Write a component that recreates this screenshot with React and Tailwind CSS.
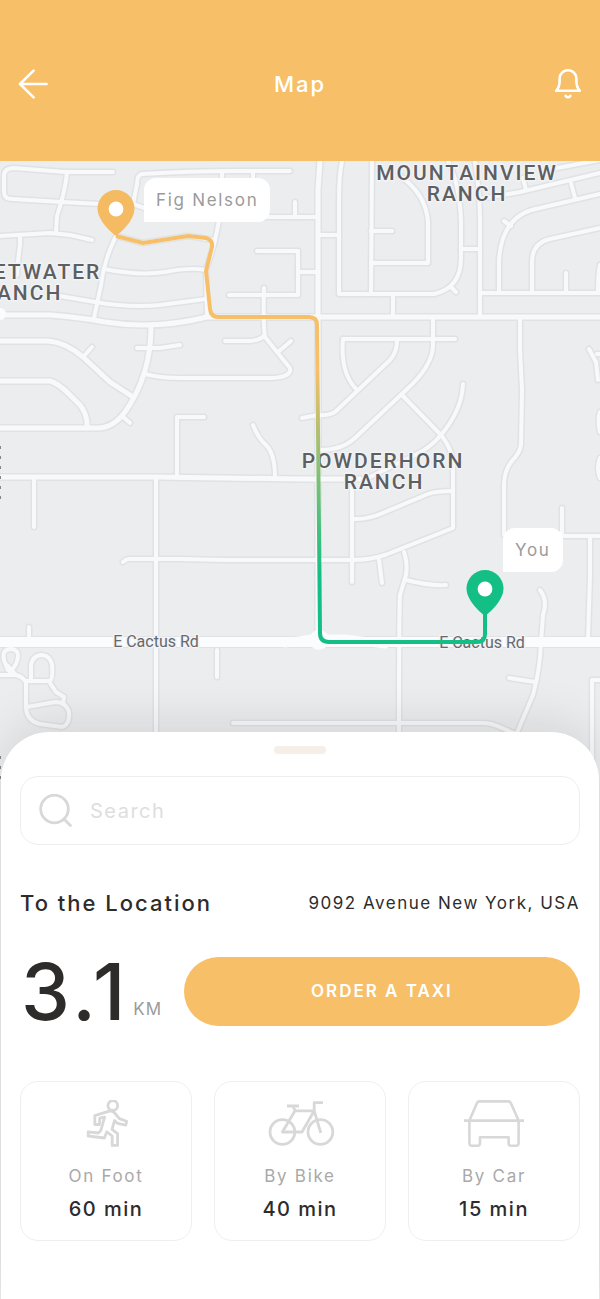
// Ride map screen: header, street map with the route, and the trip sheet

import { useState } from 'react';

// Side streets, drawn with a soft casing under a light fill
const STREETS = [
  'M113 172 L65 172 L14 168 Q4 168 4 176 V192 Q4 199 12 199 L62 202 L100 204',
  'M67 172 Q66 185 61 203 L57 216 L56 232',
  'M0 236 L50 233 L70 235 L92 240',
  'M20 236 V245 Q18 258 17 275',
  'M290 171 H235 Q190 171 142 174 Q137 175 137 184 L133 204 L150 210',
  'M222 172 V190',
  'M253 172 V190',
  'M295 202 V217',
  'M262 217 H318',
  'M220 216 L214 245 L206 270 L207 316',
  'M116 236 Q104 260 101 285 L94 318',
  'M116 236 L143 243 L188 236 L214 240',
  'M104 269 Q140 276 165 272 Q190 267 206 270',
  'M60 296 L95 302 Q130 308 160 305 L206 299',
  'M83 357 L92 347',
  'M122 416 L130 423',
  'M137 348 L160 348 L180 345',
  'M145 374 Q160 378 180 378 H272 Q292 377 290 368 Q285 362 265 337 Q263 325 264 288',
  'M278 352 L291 341',
  'M225 341 H250 Q260 340 264 336',
  'M229 295 H298 V251 H257',
  'M298 272 H318',
  'M204 417 H177 V476',
  'M253 425 Q258 438 266 445 Q275 454 275 477',
  'M342 161 Q339 175 339 200 V294 H434 Q461 288 461 258 V222 Q460 185 448 161',
  'M372 161 L371 294',
  'M371 231 H392',
  'M371 263 H428 V222 Q426 194 400 176',
  'M452 288 L456 292',
  'M318 235 H338',
  'M393 295 V316',
  'M475 161 Q480 195 480 220 V316',
  'M461 249 H480',
  'M480 293 H600',
  'M499 293 V260 Q502 214 540 208 L600 194',
  'M504 221 L511 226',
  'M532 293 V262 Q532 243 550 239 L600 228',
  'M566 293 V273',
  'M480 199 L520 192 L600 173',
  'M526 190 L523 178',
  'M575 198 L571 183',
  'M552 169 L600 160',
  'M600 265 Q598 275 598 292',
  'M433 318 V345 Q433 366 405 391 L355 438 Q342 450 320 450',
  'M343 339 H455',
  'M343 339 Q340 372 356 389',
  'M397 341 Q397 352 390 360 L335 412 Q328 416 318 415 L302 418',
  'M402 395 L441 435 Q453 450 453 465 V528 L385 555 Q370 560 352 560 L225 560 L180 559 H130 Q126 559 123 562',
  'M463 384 Q462 410 441 435 Q430 448 415 455 L370 477',
  'M520 317 V350 L522 390 L521 445 Q520 453 511 462 Q504 472 504 485 V535',
  'M589 349 L596 362 L598 380',
  'M597 354 H600',
  'M600 412 Q597 420 600 432',
  'M600 458 Q596 468 600 478',
  'M352 482 V582',
  'M352 519 Q368 520 385 512 L428 494 Q436 491 453 491',
  'M379 560 L382 583',
  'M404 552 Q408 564 406 575 L400 595 Q399 610 399 735',
  'M406 580 Q430 586 446 585',
  'M562 508 V536',
  'M550 536 H600',
  'M590 537 V575 L588 640',
  'M540 590 Q548 600 543 615 L541 642 Q540 670 533 695 L516 735',
  'M509 678 L535 682',
  'M233 723 H482 Q492 723 502 728 L520 736',
  'M592 780 V680 H600',
  'M34 480 V527',
  'M156 478 V735',
  'M29 627 V640',
  'M217 650 V677',
  'M8 670 Q-2 650 10 649 Q22 649 16 664 L10 673 M7 665 L16 675',
  'M0 675 H15 Q22 676 25 681 H50 Q53 679 52 665 Q50 655 41 655 Q31 656 31 668 V681',
  'M26 681 V708 Q27 721 40 724 L62 727 Q70 725 69 712 Q66 702 55 702 L27 707',
  'M50 683 L56 692 L64 697 L63 703',
];

const AVENUES = [
  'M0 315 L50 315 Q85 318 105 322 Q155 330 207 317 H600',
  'M0 341 H48 Q65 342 83 357 L110 382 L133 397',
  'M0 381 H50 Q58 383 70 395 L80 405 Q88 415 87 428',
  'M0 428 H98 Q113 428 125 412 Q151 375 151 327',
  'M0 477 L155 477 L300 479 H360',
  'M320 161 L318 190 V640',
];

const TRIP_OPTIONS = [
  { id: 'foot', label: 'On Foot', time: '60 min', Icon: RunnerIcon },
  { id: 'bike', label: 'By Bike', time: '40 min', Icon: BikeIcon },
  { id: 'car', label: 'By Car', time: '15 min', Icon: CarIcon },
];

function RunnerIcon() {
  return (
    <svg width="46" height="48" viewBox="-4 0 46 48" fill="none" stroke="currentColor" strokeWidth="2.8" strokeLinejoin="round">
      <circle cx="25.8" cy="5.6" r="4.9" />
      <path d="M7.8 24.5V15.6L23 10.8Q26.5 10.6 28.5 14L32.3 18.6L39.6 21.2L38.8 25.2L30.4 23.4L27.6 20.4L25 29.4L30.6 33.6V45.4H25.2V36L19.8 31.8L17.4 38L1.2 36V31.8L11.4 33L13.8 30.6L17.6 17L12.8 18.2L12.4 24.5Z" />
    </svg>
  );
}

function BikeIcon() {
  return (
    <svg width="70" height="48" viewBox="-3 0 70 48" fill="none" stroke="currentColor" strokeWidth="2.8" strokeLinejoin="round">
      <circle cx="14.4" cy="32" r="12.4" />
      <circle cx="52.4" cy="32" r="12.4" />
      <path d="M19 6H31M25 6L27 10.8M55 2.6H46.2V10.8L52.8 33M27 10.8H46.2L34 32H14.4L27 10.8" />
    </svg>
  );
}

function CarIcon() {
  return (
    <svg width="60" height="48" viewBox="0 0 60 48" fill="none" stroke="currentColor" strokeWidth="2.6" strokeLinejoin="round">
      <path d="M0 20.6H60" />
      <path d="M5.4 20.6L13 3Q13.8 1.4 15.4 1.4H44.4Q46 1.4 46.8 3L54.6 20.6V43Q54.6 45.8 52 45.8H47Q44.6 45.8 44.6 43V37.2H16V43Q16 45.8 13.4 45.8H8Q5.4 45.8 5.4 43Z" />
    </svg>
  );
}

// Teardrop pin whose tip sits on (x, y)
function Pin({ x, y, color }) {
  return (
    <g transform={`translate(${x} ${y})`}>
      <path d="M0 0C-3 -2 -18.5 -15 -18.5 -27.5A18.5 18.5 0 0 1 18.5 -27.5C18.5 -15 3 -2 0 0Z" fill={color} />
      <circle cx="0" cy="-27" r="7.4" fill="#fff" />
    </g>
  );
}

function StreetMap() {
  return (
    <svg className="block" width="600" height="618" viewBox="0 161 600 618" fill="none" aria-label="Street map">
      <defs>
        <linearGradient id="route" gradientUnits="userSpaceOnUse" x1="0" y1="370" x2="0" y2="575">
          <stop offset="0" stopColor="#f7bf68" />
          <stop offset="1" stopColor="#13bf84" />
        </linearGradient>
      </defs>
      <rect x="0" y="161" width="600" height="618" fill="#ebedef" />

      <g strokeLinecap="round" strokeLinejoin="round">
        <g stroke="#e0e2e5">
          {STREETS.map(d => <path key={d} d={d} strokeWidth="7" />)}
          {AVENUES.map(d => <path key={d} d={d} strokeWidth="8" />)}
          <path d="M-10 642H610" strokeWidth="12" />
        </g>
        <g stroke="#f8f9fa">
          {STREETS.map(d => <path key={d} d={d} strokeWidth="4" />)}
          {AVENUES.map(d => <path key={d} d={d} strokeWidth="5" />)}
        </g>
        <path d="M-10 642H610" stroke="#fbfcfd" strokeWidth="10" />
        <path d="M285 643L312 639H345L385 644" stroke="#fbfcfd" strokeWidth="9" />
        <circle cx="319" cy="640" r="10" fill="#fbfcfd" />
        <circle cx="0" cy="314" r="6" fill="#fbfcfd" />
      </g>

      {/* Neighbourhood and road names */}
      <g
        fontFamily="Roboto, sans-serif"
        fill="#5d5f62"
        stroke="#f2f3f5"
        strokeWidth="3"
        strokeLinejoin="round"
        paintOrder="stroke"
        textAnchor="middle"
      >
        <g fontSize="21" fontWeight="500" letterSpacing="2">
          <text x="467" y="180">MOUNTAINVIEW</text>
          <text x="467" y="201">RANCH</text>
          <text x="383" y="468">POWDERHORN</text>
          <text x="384" y="489">RANCH</text>
          <text x="23" y="279">SWEETWATER</text>
          <text x="22" y="300">RANCH</text>
        </g>
        <g fontSize="16" fill="#67696c">
          <text x="156" y="647">E Cactus Rd</text>
          <text x="482" y="648">E Cactus Rd</text>
        </g>
      </g>
      <path d="M0 446V503M0 756V779" stroke="#85878b" strokeWidth="2" strokeDasharray="3 7" />

      <path
        d="M116 236L143 243L188 236L206 238Q213 240 212 247L206 271L210 309Q211 317 218 317H309Q317 317 317 325L320 633Q320 642 329 642H477Q485 642 485 634V612"
        stroke="url(#route)"
        strokeWidth="4"
        strokeLinejoin="round"
      />
      <Pin x={116} y={236} color="#f4bb63" />
      <Pin x={485} y={616} color="#13bf84" />
    </svg>
  );
}

function Header() {
  return (
    <header className="flex items-center justify-between bg-[#f7bf68] px-[18px] pt-[68px] pb-[61px] text-white">
      <button type="button" aria-label="Back" className="flex h-8 w-8 items-center">
        <svg width="30" height="30" viewBox="0 0 30 30" fill="none" stroke="currentColor" strokeWidth="2.6" strokeLinecap="round" strokeLinejoin="round">
          <path d="M28.6 15H2M15.6 1.6L2 15L15.6 28.4" />
        </svg>
      </button>
      <h1 className="text-[22px] leading-8 font-medium tracking-[2px]">Map</h1>
      <button type="button" aria-label="Notifications" className="flex h-8 w-8 items-center justify-end">
        <svg width="28" height="30" viewBox="0 0 28 30" fill="none" stroke="currentColor" strokeWidth="2.6" strokeLinecap="round" strokeLinejoin="round">
          <path d="M2.2 21.8H25.8Q22.4 18 22.4 12V9.6A8.4 8.4 0 0 0 5.6 9.6V12Q5.6 18 2.2 21.8Z" />
          <path d="M11.6 26.8Q14 29.6 16.4 26.8" />
        </svg>
      </button>
    </header>
  );
}

export default function App() {
  const [query, setQuery] = useState('');

  return (
    <div className="flex min-h-screen flex-col bg-[#e8e9ea] font-['Inter',sans-serif] text-[#2d2c2b]">
      <Header />

      <section className="relative flex justify-center overflow-hidden bg-[#ebedef]">
        <div className="relative w-[600px] shrink-0">
          <StreetMap />
          <div className="absolute top-[17px] left-36 rounded-xl rounded-bl-none bg-white px-3 py-2 text-[17px] leading-7 tracking-widest text-[#9b9b9b]">
            Fig Nelson
          </div>
          <div className="absolute top-[367px] left-[503px] rounded-xl rounded-bl-none bg-white px-3 py-2 text-[17px] leading-7 tracking-widest text-[#9b9b9b]">
            You
          </div>
        </div>
      </section>

      <main className="relative z-10 mx-px -mt-[47px] flex-1 rounded-t-[48px] bg-white px-[19px] pb-14 shadow-[0_-10px_50px_rgba(0,0,0,0.1)]">
        <div className="mx-auto h-[22px] w-[52px] pt-[14px]">
          <div className="h-2 rounded-full bg-[#f5efe8]" />
        </div>

        <label className="mt-[22px] flex h-[69px] items-center rounded-[18px] border border-[#eeeeee] px-[18px]">
          <svg className="shrink-0 text-[#d8d8d8]" width="33" height="34" viewBox="0 0 33 34" fill="none" stroke="currentColor" strokeWidth="2.8" strokeLinecap="round">
            <circle cx="15.5" cy="15" r="13.8" />
            <path d="M25 25L31.4 31.4" />
          </svg>
          <input
            type="text"
            aria-label="Search"
            value={query}
            onChange={e => setQuery(e.target.value)}
            placeholder="Search"
            className="ml-[18px] min-w-0 flex-1 text-xl tracking-[1.5px] outline-none placeholder:text-[#dedede]"
          />
        </label>

        <div className="mt-[42px] flex items-center justify-between">
          <h2 className="text-[22px] leading-8 font-medium tracking-[2px]">To the Location</h2>
          <p className="text-[17px] leading-8 tracking-[1.5px]">9092 Avenue New York, USA</p>
        </div>

        <div className="mt-[38px] flex items-center gap-[22px]">
          <p className="flex min-w-[141px] shrink-0 items-end gap-1 pl-px">
            <span className="text-[78px] leading-[69px] font-medium tracking-[4px]">3.1</span>
            <span className="pb-[5px] text-[17px] leading-6 tracking-wider text-[#9b9b9b]">KM</span>
          </p>
          <button type="button" className="h-[69px] flex-1 rounded-full bg-[#f7bf68] text-[17px] font-semibold tracking-[2px] text-white">
            ORDER A TAXI
          </button>
        </div>

        <div className="mt-[55px] grid grid-cols-3 gap-[22px]">
          {TRIP_OPTIONS.map(({ id, label, time, Icon }) => (
            <button
              key={id}
              type="button"
              className="flex flex-col items-center rounded-[18px] border border-[#efefef] pt-[18px] pb-[19px]"
            >
              <span className="text-[#d8d8d8]"><Icon /></span>
              <span className="mt-4 text-[17px] leading-6 tracking-widest text-[#a9a9a9]">{label}</span>
              <span className="mt-[9px] text-xl leading-6 font-medium tracking-[1.5px]">{time}</span>
            </button>
          ))}
        </div>
      </main>
    </div>
  );
}
